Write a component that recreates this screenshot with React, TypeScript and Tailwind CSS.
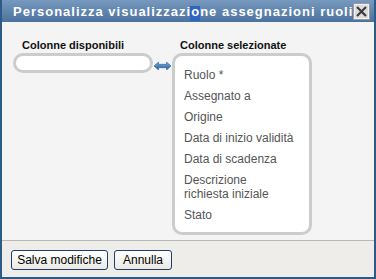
import React from "react";

const items: string[][] = [
  ["Ruolo *"],
  ["Assegnato a"],
  ["Origine"],
  ["Data di inizio validità"],
  ["Data di scadenza"],
  ["Descrizione", "richiesta iniziale"],
  ["Stato"],
];

export default function App() {
  return (
    <div
      className="w-[376px] h-[279px] flex flex-col border-x-2 border-b-2 border-[#2c5b87] bg-[#f4f4f4]"
      style={{ fontFamily: '"Liberation Sans", Arial, sans-serif' }}
    >
      {/* Title bar */}
      <div className="h-[22px] -mx-[2px] flex items-center justify-between pl-[11px] pr-[4px] bg-gradient-to-b from-[#7799be] to-[#4b729e] border-x-2 border-[#2c5b87]">
        <div className="text-[13px] leading-[15px] font-bold text-white tracking-[1px] whitespace-nowrap mt-[1px]">
          Personalizza visualizzazi
          <span className="relative">
            <span className="absolute left-[-1px] right-0 top-[2px] bottom-[-2px] bg-[#2f63c4]" />
            <span className="relative">o</span>
          </span>
          ne assegnazioni ruoli
        </div>
        <svg width="17" height="17" viewBox="0 0 17 17" className="shrink-0 mt-[1px]">
          <rect x="0.5" y="0.5" width="16" height="16" fill="#dcdcdc" stroke="#9a9a9a" />
          <rect x="1.5" y="1.5" width="14" height="14" fill="none" stroke="#f2f2f2" />
          <path d="M4 4 L13 13 M13 4 L4 13" stroke="#3c3c3c" strokeWidth="2.2" />
        </svg>
      </div>

      {/* Content */}
      <div className="flex-1 pt-[17px] pl-[11px] flex flex-row items-start">
        <div className="w-[140px] flex flex-col">
          <div className="pl-[9px] text-[11px] leading-[13px] font-bold text-[#111] mb-[1px]">
            Colonne disponibili
          </div>
          <div className="h-[20px] rounded-[10px] border-[3px] border-[#cccccc] bg-white" />
        </div>
        <div className="w-[19px] pt-[23px] pl-[1px]">
          <svg width="17" height="8" viewBox="0 0 17 8">
            <defs>
              <linearGradient id="ag" x1="0" y1="0" x2="0" y2="1">
                <stop offset="0" stopColor="#7fb0e0" />
                <stop offset="1" stopColor="#1f5a9a" />
              </linearGradient>
            </defs>
            <path
              d="M0 4 L4.5 0 L4.5 2.3 L12.5 2.3 L12.5 0 L17 4 L12.5 8 L12.5 5.7 L4.5 5.7 L4.5 8 Z"
              fill="url(#ag)"
              stroke="#2a5d95"
              strokeWidth="0.6"
            />
          </svg>
        </div>
        <div className="w-[140px] flex flex-col">
          <div className="pl-[8px] text-[11px] leading-[13px] font-bold text-[#111] mb-[1px]">
            Colonne selezionate
          </div>
          <div className="h-[182px] rounded-[10px] border-[3px] border-[#cccccc] bg-white pl-[9px] pt-[12px] flex flex-col gap-[7px]">
            {items.map((lines, i) => (
              <div key={i} className="text-[12px] leading-[14px] text-[#555555]">
                {lines.map((l, j) => (
                  <div key={j}>{l}</div>
                ))}
              </div>
            ))}
          </div>
        </div>
      </div>

      {/* Footer */}
      <div className="h-[37px] border-t border-[#b8b8b8] bg-[#eeedea] pl-[9px] pt-[9px] flex flex-row items-start gap-[6px]">
        <button className="w-[97px] h-[20px] rounded-[3px] border border-[#1e3d6c] bg-gradient-to-b from-[#ffffff] to-[#ebe9e2] text-[12px] leading-[14px] text-black">
          Salva modifiche
        </button>
        <button className="w-[58px] h-[20px] rounded-[3px] border border-[#1e3d6c] bg-gradient-to-b from-[#ffffff] to-[#ebe9e2] text-[12px] leading-[14px] text-black">
          Annulla
        </button>
      </div>
    </div>
  );
}
